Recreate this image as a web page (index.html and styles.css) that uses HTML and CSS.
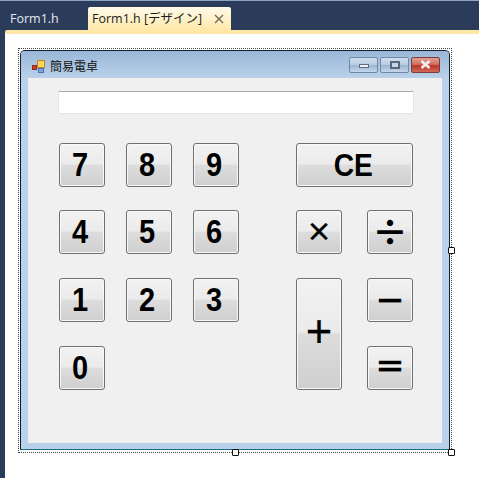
FILE: index.html
```html
<!DOCTYPE html>
<html lang="ja">
<head>
<meta charset="utf-8">
<title>Form1.h [デザイン]</title>
<link rel="stylesheet" href="styles.css">
</head>
<body>
<div class="ide">
  <div class="tabbar">
    <div class="tab">Form1.h</div>
    <div class="tab active">Form1.h [デザイン]
      <svg class="tab-close" width="10" height="10" viewBox="0 0 10 10"><path d="M1 1l8 8M9 1l-8 8" stroke="#6f6a58" stroke-width="1.4" fill="none"/></svg>
    </div>
  </div>
  <div class="doc">
    <div class="doc-strip"></div>
    <div class="surface">
      <div class="selection">
        <div class="window">
          <div class="titlebar">
            <svg class="app-icon" width="16" height="16" viewBox="0 0 16 16">
              <rect x="6.5" y="2.5" width="7" height="7" fill="#fcd45a" stroke="#b98a2a"/>
              <rect x="1.5" y="7.5" width="4" height="4" fill="#d8352c" stroke="#8a2a20"/>
              <rect x="7.5" y="10.5" width="5" height="4" fill="#7fa8e0" stroke="#4a70b0"/>
            </svg>
            <span class="title">簡易電卓</span>
            <div class="controls">
              <div class="ctl ctl-min"><span class="glyph-min"></span></div>
              <div class="ctl ctl-max"><span class="glyph-max"></span></div>
              <div class="ctl ctl-close"><svg width="15" height="11" viewBox="0 0 15 11"><path d="M3.5 2l8 7M11.5 2l-8 7" stroke="#f4eeee" stroke-width="2.6" fill="none"/></svg></div>
            </div>
          </div>
          <div class="client">
            <div class="display"></div>
            <div class="keys">
              <div class="key k7"><span class="num">7</span></div>
              <div class="key k8"><span class="num">8</span></div>
              <div class="key k9"><span class="num">9</span></div>
              <div class="key kce"><span class="num">CE</span></div>
              <div class="key k4"><span class="num">4</span></div>
              <div class="key k5"><span class="num">5</span></div>
              <div class="key k6"><span class="num">6</span></div>
              <div class="key op kmul">×</div>
              <div class="key op kdiv">÷</div>
              <div class="key k1"><span class="num">1</span></div>
              <div class="key k2"><span class="num">2</span></div>
              <div class="key k3"><span class="num">3</span></div>
              <div class="key op kadd">＋</div>
              <div class="key op ksub">－</div>
              <div class="key k0"><span class="num">0</span></div>
              <div class="key op keq">＝</div>
            </div>
          </div>
        </div>
        <span class="handle h-right"></span>
        <span class="handle h-bottom"></span>
        <span class="handle h-corner"></span>
      </div>
    </div>
  </div>
</div>
</body>
</html>
```
FILE: styles.css
```css
* { box-sizing: border-box; }
html, body { margin: 0; height: 100%; }
body {
  width: 479px;
  height: 478px;
  overflow: hidden;
  font-family: "Noto Sans CJK JP", sans-serif;
}
.ide {
  height: 478px;
  background: #2b3c5b;
  border-top: 1px solid #8fa3c2;
  display: flex;
  flex-direction: column;
}
.tabbar {
  height: 29px;
  display: flex;
  align-items: flex-end;
}
.tab {
  width: 88px;
  height: 23px;
  padding-left: 10px;
  font: 12.5px/23px "Open Sans", "Noto Sans CJK JP", sans-serif;
  color: #e4e8ef;
}
.tab.active {
  width: 143px;
  padding-left: 4px;
  color: #1c1c1c;
  border-radius: 2px 2px 0 0;
  background: linear-gradient(#fffaeb, #ffe8a8);
  display: flex;
  align-items: center;
}
.tab-close { margin-left: auto; margin-right: 7px; }
.doc {
  flex: 1;
  margin-left: 5px;
  display: flex;
  flex-direction: column;
}
.doc-strip {
  height: 4px;
  background: #ffe8a6;
  border-radius: 2px 0 0 0;
}
.surface {
  flex: 1;
  background: #fff;
  padding: 14px 0 0 13px;
}
.selection {
  position: relative;
  width: 434px;
  height: 405px;
  border: 1px dotted #444;
  padding: 1px;
}
.window {
  height: 400px;
  width: 430px;
  background: #b9d1ea;
  border: 1px solid #12202e;
  border-bottom-color: #1a6a80;
  border-radius: 5px 5px 0 0;
  display: flex;
  flex-direction: column;
}
.titlebar {
  height: 27px;
  flex: none;
  display: flex;
  align-items: center;
  padding: 2px 9px 0 10px;
  border-radius: 4px 4px 0 0;
  background: linear-gradient(#9bb7d8, #b9d1ea);
}
.app-icon { flex: none; }
.title {
  margin-left: 3px;
  font-size: 12px;
  color: #111;
}
.controls {
  margin-left: auto;
  margin-top: -2px;
  display: flex;
  gap: 2px;
}
.ctl {
  width: 29px;
  height: 16px;
  border: 1px solid #6f88a6;
  border-radius: 2px;
  background: linear-gradient(#cfdeee 0, #b7cce3 48%, #9db6d2 54%, #c4d6ea 100%);
  display: flex;
  align-items: center;
  justify-content: center;
}
.ctl-close {
  border-color: #7e3a3a;
  background: linear-gradient(#e0a090 0, #d27060 45%, #b8352a 55%, #cf6a5c 100%);
}
.glyph-min {
  width: 10px;
  height: 4px;
  margin-top: 3px;
  background: #eef2f7;
  border: 1px solid #5d6d82;
}
.glyph-max {
  width: 10px;
  height: 8px;
  background: #c6d5e6;
  border: 2px solid #56677c;
}
.client {
  margin: 0 7px;
  height: 365px;
  background: #f0f0f0;
  padding: 13px 0 0 30px;
}
.display {
  width: 356px;
  height: 23px;
  background: #fff;
  border: 1px solid #e4e4e4;
  border-top-color: #ababab;
  border-radius: 2px;
}
.keys {
  margin: 29px 0 0 1px;
  display: grid;
  grid-template-columns: 46px 21px 46px 21px 46px 57px 46px 25px 46px;
  grid-template-rows: 44px 23px 44px 24px 44px 24px 44px;
}
.key {
  display: flex;
  align-items: center;
  justify-content: center;
  padding: 0 3px 1px 0;
  border: 1px solid #707070;
  border-radius: 3px;
  background: linear-gradient(#f2f2f2 0, #ebebeb 48%, #dddddd 50%, #cfcfcf 100%);
  box-shadow: inset 0 0 0 1px #f8f8f8;
  color: #000;
  font: bold 33px/1 "Liberation Sans", sans-serif;
}
.num {
  display: inline-block;
  transform: scaleX(0.88);
}
.op {
  font-family: "Noto Sans CJK JP", sans-serif;
  font-size: 31px;
  padding: 0 0 4px;
  -webkit-text-stroke: 0.3px #000;
}
.k7 { grid-area: 1 / 1; }
.k8 { grid-area: 1 / 3; }
.k9 { grid-area: 1 / 5; }
.kce { grid-area: 1 / 7 / auto / span 3; font-size: 32px; }
.k4 { grid-area: 3 / 1; }
.k5 { grid-area: 3 / 3; }
.k6 { grid-area: 3 / 5; }
.kmul { grid-area: 3 / 7; font-size: 26px; }
.kdiv { grid-area: 3 / 9; font-size: 36px; -webkit-text-stroke: 0; }
.k1 { grid-area: 5 / 1; }
.k2 { grid-area: 5 / 3; }
.k3 { grid-area: 5 / 5; }
.kadd { grid-area: 5 / 7 / span 3; padding-bottom: 9px; }
.ksub { grid-area: 5 / 9; }
.k0 { grid-area: 7 / 1; }
.keq { grid-area: 7 / 9; padding-bottom: 8px; }
.handle {
  position: absolute;
  width: 7px;
  height: 7px;
  background: #fff;
  border: 1px solid #111;
  border-radius: 1px;
}
.h-right { right: -4px; top: 198px; }
.h-bottom { left: 213px; bottom: -4px; }
.h-corner { right: -4px; bottom: -4px; }
```
